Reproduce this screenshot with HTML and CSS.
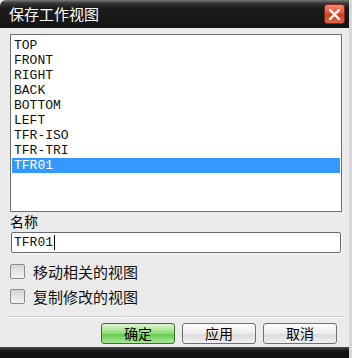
FILE: index.html
```html
<!DOCTYPE html>
<html lang="zh-CN">
<head>
    <meta charset="UTF-8">
    <title>保存工作视图</title>
    <link rel="stylesheet" href="styles.css">
</head>
<body>

    <div class="window">
        <!-- Title bar -->
        <div class="titlebar">
            <span class="title">保存工作视图</span>
            <div class="close">
                <svg width="13" height="13" viewBox="0 0 13 13">
                    <path d="M2 2 L11 11 M11 2 L2 11" stroke="#fff" stroke-width="2.4" stroke-linecap="round"/>
                </svg>
            </div>
        </div>

        <div class="content">
            <ul class="views">
                <li>TOP</li>
                <li>FRONT</li>
                <li>RIGHT</li>
                <li>BACK</li>
                <li>BOTTOM</li>
                <li>LEFT</li>
                <li>TFR-ISO</li>
                <li>TFR-TRI</li>
                <li class="selected">TFR01</li>
            </ul>

            <div class="label">名称</div>
            <div class="field"><span class="value">TFR01</span><span class="caret"></span></div>

            <div class="checks">
                <div class="check-row"><span class="box"></span><span>移动相关的视图</span></div>
                <div class="check-row"><span class="box"></span><span>复制修改的视图</span></div>
            </div>

            <div class="separator"></div>

            <div class="buttons">
                <button class="btn primary">确定</button>
                <button class="btn">应用</button>
                <button class="btn">取消</button>
            </div>
        </div>

        <div class="bottombar"></div>
    </div>

</body>
</html>
```
FILE: styles.css
```css
* {
    box-sizing: border-box;
    margin: 0;
    padding: 0;
}
body {
    width: 352px;
    height: 358px;
    background: #ebebeb;
    font-family: "Noto Sans CJK SC", sans-serif;
    color: #000;
    overflow: hidden;
}
.window {
    display: flex;
    flex-direction: column;
    height: 358px;
    background: #ebebeb;
    border-right: 3px solid #d8d8d8;
}
.titlebar {
    height: 28px;
    display: flex;
    align-items: center;
    justify-content: space-between;
    padding: 0 4px 0 9px;
    background: linear-gradient(#7a7a7a 0, #3a3a3a 3px, #1c1c1c 8px, #141414 100%);
    border-top-left-radius: 6px;
}
.title {
    color: #fff;
    font-size: 15px;
    line-height: 20px;
}
.close {
    width: 21px;
    height: 20px;
    display: flex;
    align-items: center;
    justify-content: center;
    border-radius: 3px;
    border: 1px solid #7a2a1a;
    background: linear-gradient(#f08a70, #e0522e 50%, #cc3a1c 51%, #e06a48);
}
.content {
    flex: 1;
    display: flex;
    flex-direction: column;
    padding: 6px 7px 0 10px;
}
.views {
    list-style: none;
    height: 178px;
    border: 1px solid #6f6f6f;
    background: #fff;
    padding: 3px 1px 1px 1px;
    font-family: "Liberation Mono", monospace;
    font-size: 13px;
    color: #111;
}
.views li {
    height: 15px;
    line-height: 15px;
    padding-left: 2px;
}
.views li.selected {
    background: #3399ff;
    color: #fff;
}
.label {
    font-size: 14px;
    line-height: 18px;
    height: 20px;
}
.field {
    height: 21px;
    margin-left: 1px;
    width: 330px;
    border: 1px solid #6a6a6a;
    border-radius: 2px;
    background: #fff;
    box-shadow: 1px 1px 0 #f8f8f8;
    display: flex;
    align-items: center;
    padding-left: 2px;
    font-family: "Liberation Mono", monospace;
    font-size: 13px;
    color: #111;
}
.caret {
    width: 1px;
    height: 15px;
    background: #000;
    margin-left: 1px;
}
.checks {
    margin-top: 6px;
}
.check-row {
    display: flex;
    align-items: center;
    gap: 8px;
    height: 25px;
    font-size: 15px;
    color: #111;
}
.box {
    width: 15px;
    height: 15px;
    border: 1px solid #8c8c8c;
    border-radius: 2px;
    background: linear-gradient(#d6d6d6, #f4f4f4);
}
.separator {
    height: 2px;
    background: #d2d2d2;
    border-bottom: 1px solid #fafafa;
    margin: 7px 0 5px -2px;
    width: 336px;
}
.buttons {
    display: flex;
    gap: 7px;
    padding-left: 91px;
}
.btn {
    width: 74px;
    height: 21px;
    border: 1px solid #707070;
    border-radius: 3px;
    font-family: "Noto Sans CJK SC", sans-serif;
    font-size: 14px;
    line-height: 17px;
    color: #000;
    background: linear-gradient(#fcfcfc, #ececec 50%, #dadada 51%, #f0f0f0);
}
.btn.primary {
    border-color: #3c6e34;
    background: linear-gradient(#dff7d2, #8fdc78 50%, #62c84c 51%, #a9e996);
}
.bottombar {
    height: 11px;
    background: linear-gradient(#4a4a4a, #151515 4px, #101010);
}
```
